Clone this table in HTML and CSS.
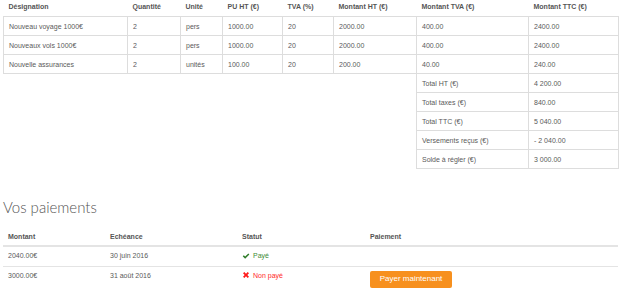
FILE: index.html
```html
<!DOCTYPE html>
<html lang="fr">
<head>
<meta charset="utf-8">
<title>Facture</title>
<link rel="stylesheet" href="styles.css">
</head>
<body>
<div class="page">
  <table class="invoice">
    <colgroup>
      <col class="c1"><col class="c2"><col class="c3"><col class="c4"><col class="c5"><col class="c6"><col class="c7"><col class="c8">
    </colgroup>
    <thead>
      <tr>
        <th>Désignation</th><th>Quantité</th><th>Unité</th><th>PU HT (€)</th><th>TVA (%)</th><th>Montant HT (€)</th><th>Montant TVA (€)</th><th>Montant TTC (€)</th>
      </tr>
    </thead>
    <tbody>
      <tr class="line"><td>Nouveau voyage 1000€</td><td>2</td><td>pers</td><td>1000.00</td><td>20</td><td>2000.00</td><td>400.00</td><td>2400.00</td></tr>
      <tr class="line"><td>Nouveaux vols 1000€</td><td>2</td><td>pers</td><td>1000.00</td><td>20</td><td>2000.00</td><td>400.00</td><td>2400.00</td></tr>
      <tr class="line"><td>Nouvelle assurances</td><td>2</td><td>unités</td><td>100.00</td><td>20</td><td>200.00</td><td>40.00</td><td>240.00</td></tr>
      <tr class="total"><td class="blank" colspan="6"></td><td>Total HT (€)</td><td>4 200.00</td></tr>
      <tr class="total"><td class="blank" colspan="6"></td><td>Total taxes (€)</td><td>840.00</td></tr>
      <tr class="total"><td class="blank" colspan="6"></td><td>Total TTC (€)</td><td>5 040.00</td></tr>
      <tr class="total"><td class="blank" colspan="6"></td><td>Versements reçus (€)</td><td>- 2 040.00</td></tr>
      <tr class="total"><td class="blank" colspan="6"></td><td>Solde à régler (€)</td><td>3 000.00</td></tr>
    </tbody>
  </table>

  <h2 class="section-title">Vos paiements</h2>

  <table class="payments">
    <colgroup>
      <col class="p1"><col class="p2"><col class="p3"><col class="p4">
    </colgroup>
    <thead>
      <tr><th>Montant</th><th>Echéance</th><th>Statut</th><th>Paiement</th></tr>
    </thead>
    <tbody>
      <tr>
        <td>2040.00€</td>
        <td>30 juin 2016</td>
        <td><span class="status paid"><svg class="ico" viewBox="0 0 16 16" width="8" height="8"><path d="M1.5 8.6 L3.6 6.5 L6.3 9.2 L12.6 2.9 L14.7 5 L6.3 13.4 Z" fill="#2f7d2a"/></svg>Payé</span></td>
        <td></td>
      </tr>
      <tr>
        <td>3000.00€</td>
        <td>31 août 2016</td>
        <td><span class="status unpaid"><svg class="ico" viewBox="0 0 16 16" width="8" height="8"><path d="M2 4.6 L4.6 2 L8 5.4 L11.4 2 L14 4.6 L10.6 8 L14 11.4 L11.4 14 L8 10.6 L4.6 14 L2 11.4 L5.4 8 Z" fill="#ff1a1a"/></svg>Non payé</span></td>
        <td><button class="pay-btn" type="button">Payer maintenant</button></td>
      </tr>
    </tbody>
  </table>
</div>
</body>
</html>
```

FILE: styles.css
```css
html, body {
  margin: 0;
  padding: 0;
  background: #ffffff;
}
body {
  font-family: "Liberation Sans", Arial, sans-serif;
  font-size: 7px;
  color: #5a5a5a;
}
.page {
  padding: 0 2px 0 3px;
}
table {
  border-collapse: collapse;
  width: 615px;
  table-layout: fixed;
}
th {
  font-weight: bold;
  color: #555555;
  text-align: left;
}
th, td {
  line-height: 9px;
  white-space: nowrap;
}

/* invoice table */
.invoice .c1 { width: 124px; }
.invoice .c2 { width: 53px; }
.invoice .c3 { width: 42px; }
.invoice .c4 { width: 60px; }
.invoice .c5 { width: 51px; }
.invoice .c6 { width: 83px; }
.invoice .c7 { width: 112px; }
.invoice .c8 { width: 90px; }
.invoice th {
  padding: 2px 5px 5px 5px;
}
.invoice td {
  height: 9px;
  padding: 5px 5px 4px 5px;
  border: 1px solid #dddddd;
}
.invoice td.blank {
  border: none;
}
.invoice tr.total:first-of-type td.blank {
  border-top: 1px solid #dddddd;
}

/* heading */
.section-title {
  margin: 28px 0 11px 0;
  font-family: "Lato", "Open Sans", sans-serif;
  font-weight: 300;
  font-size: 15px;
  line-height: 20px;
  color: #555555;
}

/* payments */
.payments .p1 { width: 102px; }
.payments .p2 { width: 132px; }
.payments .p3 { width: 128px; }
.payments .p4 { width: 253px; }
.payments th {
  padding: 4px 5px 4px 5px;
  border-bottom: 2px solid #e4e4e4;
}
.payments td {
  padding: 4px 5px 4px 5px;
  border-top: 1px solid #e4e4e4;
  vertical-align: top;
}
.status {
  display: inline-flex;
  align-items: center;
  gap: 3px;
}
.status.paid { color: #3d8b37; }
.status.unpaid { color: #ff2a2a; }
.ico { display: block; }
.pay-btn {
  display: block;
  margin: 0;
  border: none;
  border-radius: 2px;
  background: #f7901e;
  color: #ffffff;
  font-family: "Liberation Sans", Arial, sans-serif;
  font-size: 8px;
  line-height: 10px;
  width: 82px;
  height: 17px;
  padding: 0;
  text-align: center;
  cursor: pointer;
}
```
